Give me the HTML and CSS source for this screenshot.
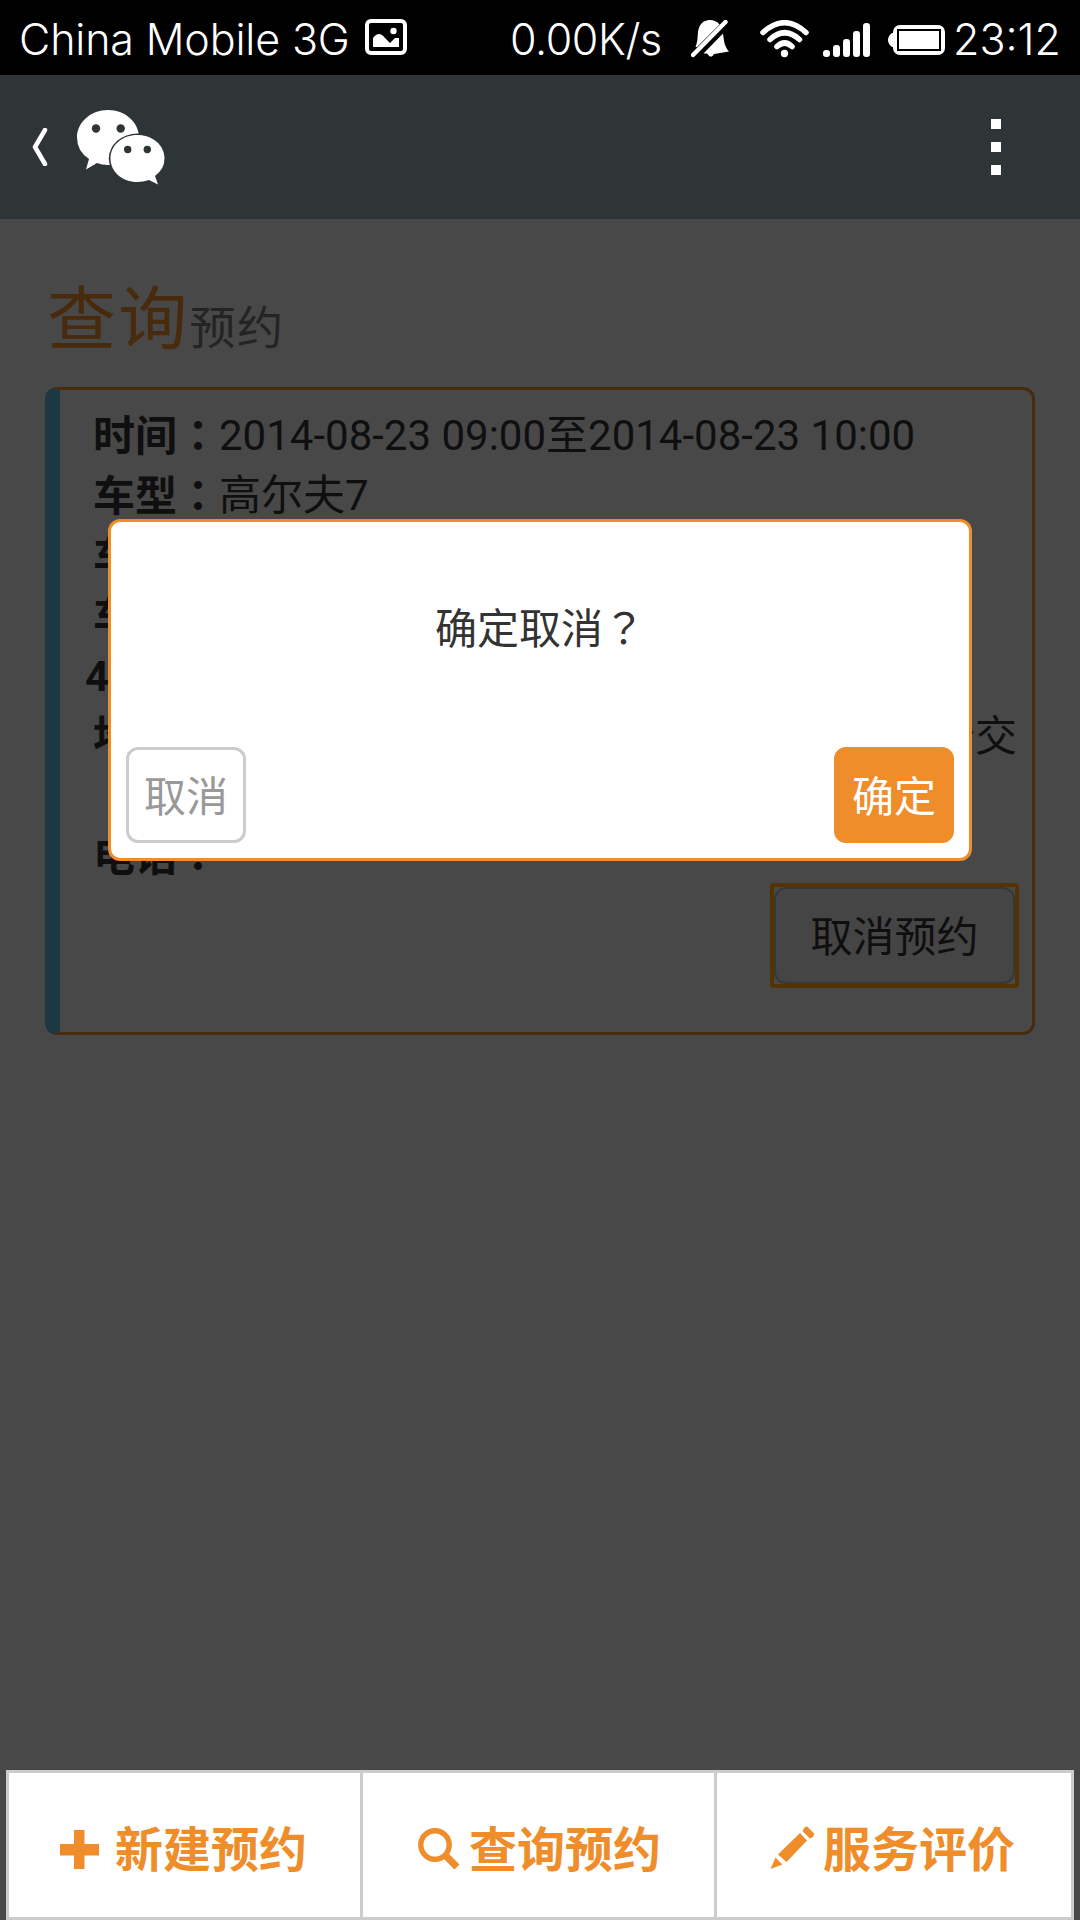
FILE: index.html
```html
<!DOCTYPE html>
<html lang="zh-CN">
<head>
<meta charset="utf-8">
<title>查询预约</title>
<link rel="stylesheet" href="styles.css">
</head>
<body>
<div class="screen">
  <div class="status">
    <span class="carrier">China Mobile 3G</span>
    <svg class="i-photo" width="42" height="36" viewBox="0 0 42 36"><rect x="2" y="2" width="38" height="32" rx="4" fill="none" stroke="#fff" stroke-width="4"/><path d="M8 28V19q6-8 12 0l5 5 5-5h4v9z" fill="#fff"/><circle cx="28.500" cy="12" r="3.200" fill="#fff"/></svg>
    <span class="speed">0.00K/s</span>
    <svg class="i-bell" width="38" height="38" viewBox="0 0 38 38"><path d="M4.500 27C8 19 5.500 13 8.500 6.500C12-1.500 24-2 28.500 4.500L6 27zM32 13.500L12.500 33.500H16Q20 39.500 23 34L38 31.500C33 26 33 20 32 13.500z" fill="#fff"/><path d="M2 35L34.500 2" stroke="#fff" stroke-width="4.400" stroke-linecap="round"/></svg>
    <svg class="i-wifi" width="50" height="38" viewBox="0 0 50 38"><g fill="none" stroke="#fff" stroke-width="5.500" stroke-linecap="round"><path d="M3 12.500Q24.500-7 46 12.500"/><path d="M10 19.500Q24.500 6 39.500 19.500"/><path d="M17 26.500Q24.500 19.500 32 26.500"/></g><circle cx="24.500" cy="33.500" r="3.700" fill="#fff"/></svg>
    <svg class="i-signal" width="48" height="34" viewBox="0 0 48 34" fill="#fff"><rect x="0" y="27" width="7" height="7" rx="3"/><rect x="10" y="22" width="7" height="12" rx="3"/><rect x="20" y="16" width="7" height="18" rx="3"/><rect x="30" y="8" width="7" height="26" rx="3"/><rect x="40" y="0" width="7" height="34" rx="3"/></svg>
    <svg class="i-battery" width="57" height="30" viewBox="0 0 57 30"><path d="M7 8H4Q0 11 0 15t4 7h3z" fill="#fff"/><rect x="7" y="2" width="48" height="26" rx="5" fill="none" stroke="#fff" stroke-width="4"/><rect x="11" y="6" width="40" height="18" fill="#fff"/><rect x="10" y="5" width="42" height="20" fill="none" stroke="#000" stroke-width="2"/></svg>
    <span class="clock">23:12</span>
  </div>
  <div class="appbar">
    <svg class="i-back" width="16" height="38" viewBox="0 0 16 38"><path d="M13 2L3 19l10 17" fill="none" stroke="#fff" stroke-width="4.500" stroke-linecap="round" stroke-linejoin="round"/></svg>
    <svg class="i-chat" width="88" height="75" viewBox="0 0 88 75"><path d="M31 0C48 0 62 12 62 27.500S48 55 31 55Q25 55 20 53L9 59.500 12 49Q0 41 0 27.500C0 12 14 0 31 0z" fill="#fff"/><ellipse cx="60.500" cy="48.500" rx="28.700" ry="25" fill="#2f3436"/><path d="M60.500 25C75.500 25 87.500 35 87.500 48.500Q87.500 59 78 66L81 74.500 72 70Q66 72 60.500 72C45 72 33.500 61.500 33.500 48.500S45 25 60.500 25z" fill="#fff"/><g fill="#2f3436"><circle cx="19" cy="18.500" r="4.200"/><circle cx="43.700" cy="18.500" r="4.200"/><circle cx="50.700" cy="39.500" r="3.700"/><circle cx="70.300" cy="39.500" r="3.700"/></g></svg>
    <span class="more"><i></i><i></i><i></i></span>
  </div>
  <div class="page">
    <h1 class="title">查询<small>预约</small></h1>
    <div class="card">
      <div class="row"><b>时间<span lang="zh-TW">：</span></b><span>2014-08-23 09:00至2014-08-23 10:00</span></div>
      <div class="row"><b>车型<span lang="zh-TW">：</span></b><span>高尔夫7</span></div>
      <div class="row"><b>车牌<span lang="zh-TW">：</span></b></div>
      <div class="row"><b>车主<span lang="zh-TW">：</span></b></div>
      <div class="row"><b>4S店<span lang="zh-TW">：</span></b></div>
      <div class="row address"><b>地址<span lang="zh-TW">：</span></b><span>公交</span></div>
      <div class="row"><b>电话<span lang="zh-TW">：</span></b></div>
      <div class="focus"><button class="revoke">取消预约</button></div>
    </div>
  </div>
  <div class="tabs">
    <a class="tab"><svg width="57" height="48" viewBox="0 0 57 48"><path d="M17 6h10.500v14H42v11.500H27.500V45H17V31.500H3V20h14z" fill="#ee8d29"/></svg><span>新建预约</span></a>
    <a class="tab"><svg width="57" height="48" viewBox="0 0 57 48"><g fill="none" stroke="#ee8d29"><circle cx="24" cy="21" r="14.200" stroke-width="5.400"/><path d="M33.500 30.500L46 43" stroke-width="7"/></g></svg><span>查询预约</span></a>
    <a class="tab"><svg width="57" height="48" viewBox="0 0 57 48"><path d="M39.500 3.500L42 2.200 49.500 10 47.500 13.500 45 14.500 37.500 7zM35 9L42 16.500 21.500 38 13 30.500zM10.500 33.500L17.500 40.500 5.500 45z" fill="#ee8d29"/></svg><span>服务评价</span></a>
  </div>
  <div class="dialog">
    <p class="message">确定取消<span lang="zh-TW">？</span></p>
    <div class="actions">
      <button class="btn cancel">取消</button>
      <button class="btn ok">确定</button>
    </div>
  </div>
</div>
</body>
</html>
```
FILE: styles.css
```css
* { box-sizing: border-box; }
body { margin: 0; }
.screen {
  position: relative;
  display: flex;
  flex-direction: column;
  width: 1080px;
  height: 1920px;
  overflow: hidden;
  background: #484848;
  color: #0f0f0f;
  font: 42px/60px Roboto, "Noto Sans CJK SC", sans-serif;
}
/* centred full-width punctuation */
[lang="zh-TW"] { font-family: "Noto Sans CJK TC", sans-serif; line-height: 0; }
svg { display: block; flex: none; }
button { font: inherit; padding: 0; }

/* system status bar */
.status {
  display: flex;
  height: 75px;
  padding-left: 19px;
  background: #000;
  color: #fff;
  font: 300 43px/78px Inter, sans-serif;
  white-space: nowrap;
}
.carrier { width: 346px; letter-spacing: -0.15px; }
.i-photo { margin-top: 19px; }
.speed { width: 180px; margin-left: 103px; letter-spacing: -0.4px; }
.i-bell { margin: 20px 0 0 1px; }
.i-wifi { margin: 20px 0 0 31px; }
.i-signal { margin: 23px 0 0 13px; }
.i-battery { margin: 25px 0 0 17px; }
.clock { margin-left: 8px; }

/* application bar */
.appbar {
  display: flex;
  align-items: flex-start;
  height: 144px;
  padding: 0 79px 0 32px;
  background: #2f3436;
}
.i-back { margin-top: 53px; }
.i-chat { margin: 35px 0 0 29px; }
.more {
  display: flex;
  flex-direction: column;
  gap: 13px;
  margin: 44px 0 0 auto;
}
.more i { width: 10px; height: 10px; background: #fff; }

/* dimmed page */
.page { flex: 1; padding: 47px 45px 0; }
.title {
  height: 121px;
  margin: 0;
  padding-left: 2px;
  color: #482a0d;
  font: 400 69px/96px "Noto Sans CJK SC", sans-serif;
  letter-spacing: 2.2px;
}
.title small { color: #242424; font-size: 46px; letter-spacing: 1.5px; }
.card {
  display: flex;
  flex-direction: column;
  height: 648px;
  padding: 16px 12px 0 0;
  border: 3px solid #482a0d;
  border-left: 15px solid #1c3942;
  border-radius: 12px;
}
.row { display: flex; height: 60px; flex: none; white-space: nowrap; }
.row b { width: 160px; margin-right: -1px; padding: 1px 1px 0 0; text-align: right; flex: none; }
.address { height: 120px; justify-content: space-between; padding: 1px 3px 0 0; }
.address b { padding-top: 0; }
.focus {
  align-self: flex-end;
  width: 249px;
  height: 105px;
  margin: -3px 1px 0 0;
  border: 4px solid #533400;
  border-radius: 4px;
}
.revoke {
  display: block;
  width: 100%;
  height: 100%;
  padding-top: 5px;
  border: 2px solid #383838;
  border-radius: 12px;
  background: #454545;
  color: #0f0f0f;
}

/* bottom tabs */
.tabs {
  display: grid;
  grid-template-columns: 354px 354px 354px;
  height: 150px;
  margin: 0 6px;
  border: 3px solid #ccc;
  background: #fff;
}
.tab {
  display: flex;
  align-items: center;
  padding: 6px 0 0 48px;
  border-right: 3px solid #ccc;
  color: #ee8d29;
  font: 700 48px/60px "Noto Sans CJK SC", sans-serif;
}
.tab span { padding: 0 0 5px 1px; }
.tab:last-child { border-right: 0; }

/* confirmation dialog */
.dialog {
  position: absolute;
  left: 108px;
  top: 519px;
  display: flex;
  flex-direction: column;
  justify-content: space-between;
  width: 864px;
  height: 342px;
  padding: 78px 15px 15px;
  border: 3px solid #ee8d29;
  border-radius: 12px;
  background: #fff;
}
.message { margin: 0; color: #333; text-align: center; }
.actions { display: flex; justify-content: space-between; }
.btn {
  width: 120px;
  height: 96px;
  padding-top: 5px;
  border: 3px solid #ccc;
  border-radius: 12px;
  background: #fff;
  color: #999;
}
.ok { border-color: #ee8d29; background: #ee8d29; color: #fff; }
```
